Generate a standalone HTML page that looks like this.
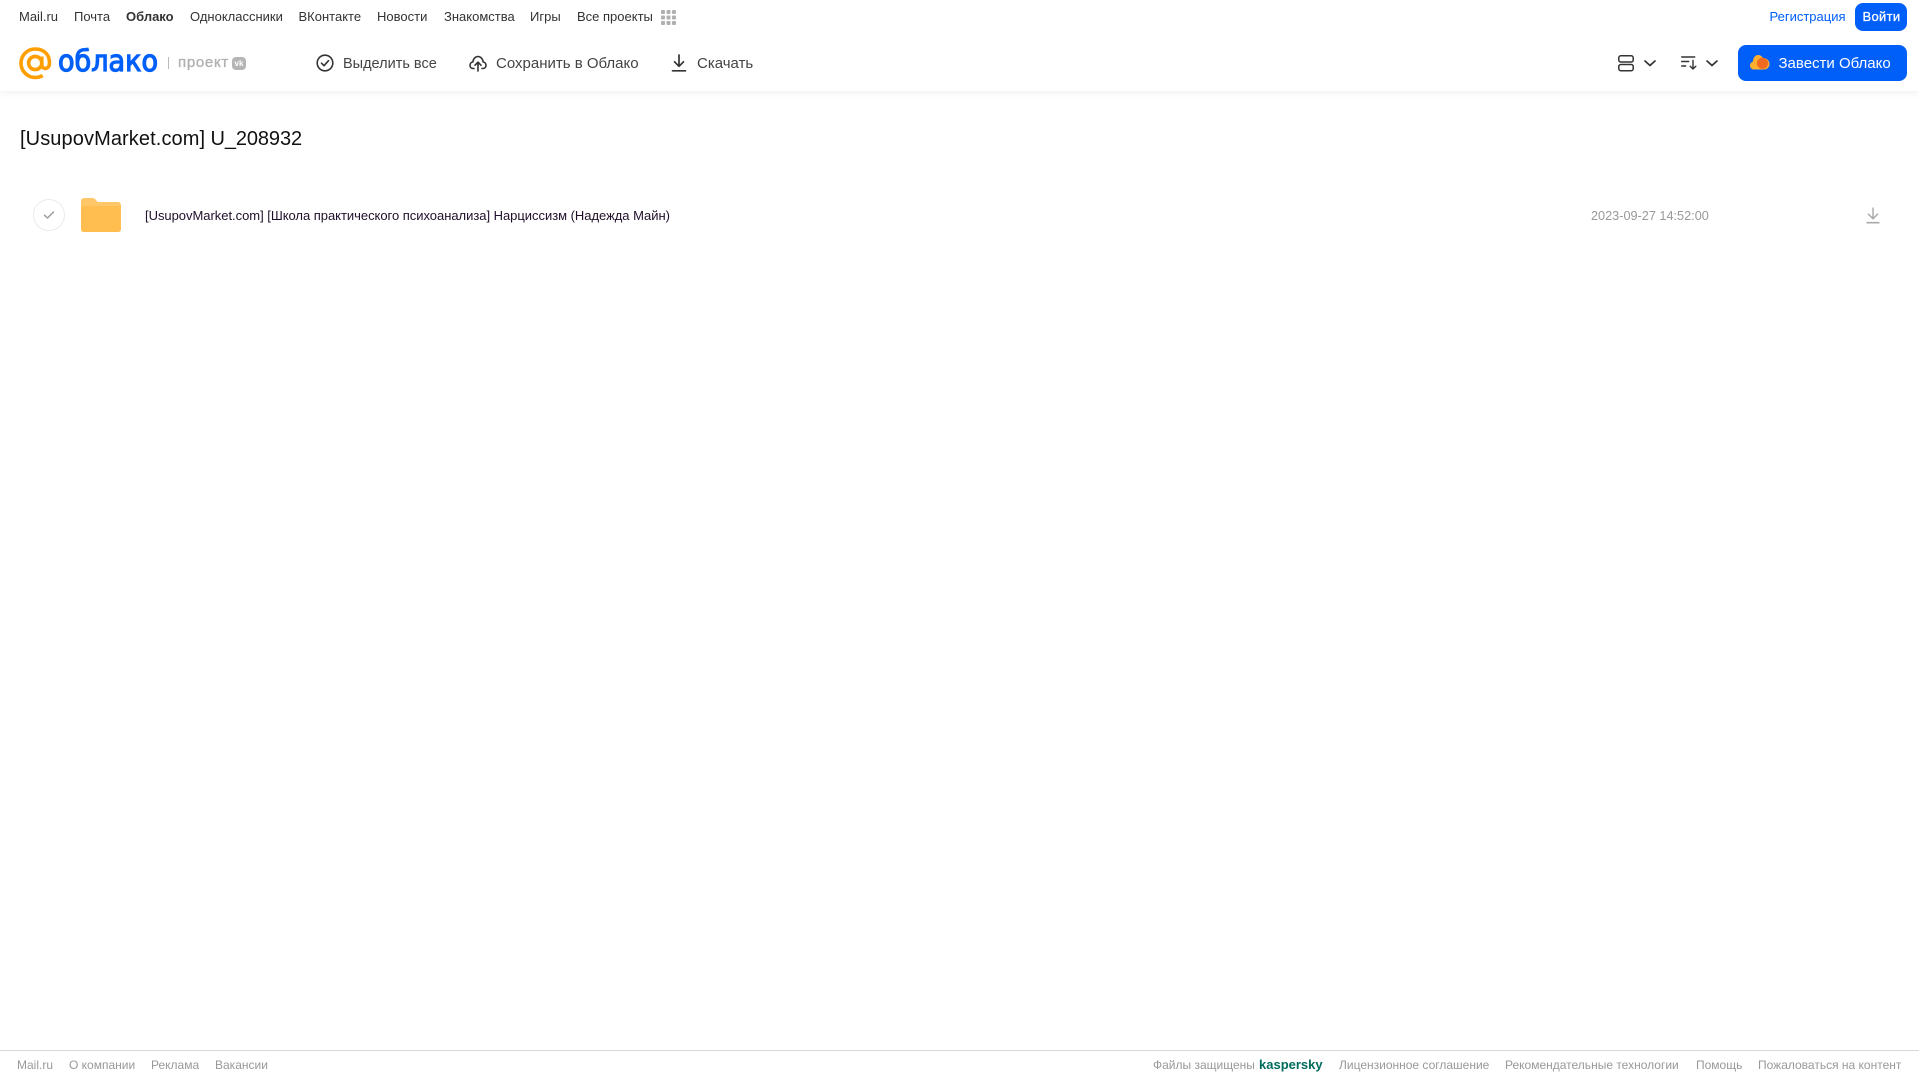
<!DOCTYPE html>
<html lang="ru"><head><meta charset="utf-8"><title>Облако</title>
<style>
html,body{margin:0;padding:0;background:#fff}
body{width:1919px;height:1079px;position:relative;overflow:hidden;font-family:"Liberation Sans",sans-serif}
.t{position:absolute;white-space:nowrap;line-height:20px;height:20px}
.n{font-size:13px;top:7px;color:#333}
.h{font-size:15px;top:53.500px;color:#444}
.f{font-size:12px;top:1055px;color:#999}
svg{position:absolute;overflow:visible}
#hdr{position:absolute;left:0;top:0;width:1919px;height:91px;background:#fff;box-shadow:0 1px 8px rgba(0,0,0,.07)}
</style></head><body>
<div id="hdr"></div>
<span class="t n" style="left:19px">Mail.ru</span>
<span class="t n" style="left:74px">Почта</span>
<span class="t n" style="left:126px;font-weight:bold">Облако</span>
<span class="t n" style="left:190px">Одноклассники</span>
<span class="t n" style="left:298.500px">ВКонтакте</span>
<span class="t n" style="left:377px">Новости</span>
<span class="t n" style="left:444px">Знакомства</span>
<span class="t n" style="left:530px">Игры</span>
<span class="t n" style="left:577px">Все проекты</span>
<svg style="left:661px;top:10px" width="15" height="15" fill="#b0b0b0"><rect width="4" height="4" rx="1"/><rect x="5.500" width="4" height="4" rx="1"/><rect x="11" width="4" height="4" rx="1"/><rect y="5.500" width="4" height="4" rx="1"/><rect x="5.500" y="5.500" width="4" height="4" rx="1"/><rect x="11" y="5.500" width="4" height="4" rx="1"/><rect y="11" width="4" height="4" rx="1"/><rect x="5.500" y="11" width="4" height="4" rx="1"/><rect x="11" y="11" width="4" height="4" rx="1"/></svg>
<span class="t n" style="left:1769.500px;color:#005ff9">Регистрация</span>
<div style="position:absolute;left:1855px;top:3px;width:52px;height:28px;background:#005ff9;border-radius:8px"></div>
<span class="t n" style="left:1862.500px;color:#fff;letter-spacing:.3px;-webkit-text-stroke:.3px #fff">Войти</span>

<svg style="left:19px;top:47px" width="33" height="33" viewBox="0 0 33 33" fill="none" stroke="#ff9e00" stroke-width="3.600"><circle cx="16.200" cy="16" r="6.600"/><path d="M22.800 9.500v8.200c0 5 6.800 5 7.500-.2C31.500 8 25 2 16.200 2 8.300 2 2 8.300 2 16.200 2 24 8.300 30.500 16.200 30.500c3 0 5.500-.8 7.500-2"/></svg>
<svg style="left:56px;top:44px" width="104" height="36"><text x="2" y="27" font-family="DejaVu Sans" font-size="29" fill="#005ff9" stroke="#005ff9" stroke-width="1.200" textLength="100" lengthAdjust="spacingAndGlyphs">облако</text></svg>
<div style="position:absolute;left:168px;top:57px;width:1px;height:12px;background:#bbb"></div>
<span class="t" style="left:178px;top:53px;font-size:15px;color:#b0b0b0;letter-spacing:.7px;-webkit-text-stroke:.35px #b0b0b0">проект</span>
<div style="position:absolute;left:232px;top:57px;width:14px;height:13px;background:#b5b5b5;border-radius:4px;color:#fff;font-size:8px;font-weight:bold;line-height:13px;text-align:center">vk</div>

<svg style="left:316px;top:54px" width="18" height="18" viewBox="0 0 18 18" fill="none" stroke="#333" stroke-width="1.600"><circle cx="9" cy="9" r="7.800"/><path d="M5.500 9.200l2.500 2.500 4.500-5" stroke-linecap="round" stroke-linejoin="round"/></svg>
<span class="t h" style="left:343px;font-size:14.500px">Выделить все</span>
<svg style="left:469px;top:54px" width="18" height="18" viewBox="0 0 18 18" fill="none" stroke="#333" stroke-width="1.600" stroke-linecap="round" stroke-linejoin="round"><path d="M5 14.500H4.200C2.300 14.500 1 13 1 11.200c0-1.700 1.200-3 2.800-3.200C4.200 4.800 6.300 2.500 9 2.500s4.800 2.300 5.200 5.500c1.600.2 2.800 1.500 2.800 3.200 0 1.800-1.300 3.300-3.200 3.300H13"/><path d="M9 17V8.500M6 11.200l3-3 3 3"/></svg>
<span class="t h" style="left:496px">Сохранить в Облако</span>
<svg style="left:671px;top:54px" width="16" height="18" viewBox="0 0 16 18" fill="none" stroke="#333" stroke-width="1.700" stroke-linecap="round" stroke-linejoin="round"><path d="M8 1v11M3.500 7.800L8 12.300l4.500-4.500"/><path d="M1.500 16.800h13"/></svg>
<span class="t h" style="left:697px">Скачать</span>

<svg style="left:1618px;top:55px" width="16" height="17" viewBox="0 0 16 17" fill="none" stroke="#333" stroke-width="1.500"><rect x=".8" y=".8" width="14.400" height="6.200" rx="2"/><rect x=".8" y="9.500" width="14.400" height="6.200" rx="2"/></svg>
<svg style="left:1644px;top:60px" width="12" height="7" viewBox="0 0 12 7" fill="none" stroke="#333" stroke-width="1.700" stroke-linecap="round" stroke-linejoin="round"><path d="M1 1l5 4.500L11 1"/></svg>
<svg style="left:1681px;top:56px" width="17" height="14" viewBox="0 0 17 14" fill="none" stroke="#333" stroke-width="1.400" stroke-linecap="round" stroke-linejoin="round"><path d="M.7 1h13M.7 5.500h7M.7 10h4"/><path d="M12 4.500V13M9.200 10.200L12 13l2.800-2.800"/></svg>
<svg style="left:1706px;top:60px" width="12" height="7" viewBox="0 0 12 7" fill="none" stroke="#333" stroke-width="1.700" stroke-linecap="round" stroke-linejoin="round"><path d="M1 1l5 4.500L11 1"/></svg>
<div style="position:absolute;left:1738px;top:45px;width:169px;height:36px;background:#005ff9;border-radius:8px"></div>
<svg style="left:1750px;top:54px" width="20" height="16" viewBox="0 0 20 16"><path d="M4 15.500C1.800 15.500 0 13.800 0 11.500c0-1.900 1.200-3.300 2.800-3.800C3 4 5.200 1 8 1c2.300 0 4 1.300 5 3.200 3.500-.5 6.500 2.300 6.500 5.800 0 3-2.400 5.500-5.500 5.500z" fill="#ffb02e"/><circle cx="12.500" cy="9.300" r="5.600" fill="#f26a1f"/></svg>
<span class="t h" style="left:1778.500px;color:#fff">Завести Облако</span>

<span class="t" style="left:20px;top:125.500px;height:26px;line-height:26px;font-size:20px;color:#111;letter-spacing:.1px">[UsupovMarket.com]</span>
<span class="t" style="left:210.500px;top:125.500px;height:26px;line-height:26px;font-size:20px;color:#111;letter-spacing:-.1px">U_208932</span>

<div style="position:absolute;left:33px;top:199px;width:30px;height:30px;border:1px solid #ebebeb;border-radius:50%"></div>
<svg style="left:43px;top:210px" width="12" height="10" viewBox="0 0 12 10" fill="none" stroke="#999" stroke-width="1.400" stroke-linecap="round" stroke-linejoin="round"><path d="M1.500 5.300L4.500 8l6-6"/></svg>
<svg style="left:81px;top:198px" width="40" height="34" viewBox="0 0 40 34"><path d="M0 3a3 3 0 0 1 3-3h8c2 0 3 .8 4 2l1.500 2H37a3 3 0 0 1 3 3v24a3 3 0 0 1-3 3H3a3 3 0 0 1-3-3z" fill="#ffc768"/><path d="M0 10a2 2 0 0 1 2-2h36a2 2 0 0 1 2 2v21a3 3 0 0 1-3 3H3a3 3 0 0 1-3-3z" fill="#ffbe4f"/></svg>
<span class="t" style="left:145px;top:205.500px;font-size:13px;letter-spacing:-.03px;color:#1f0f2a">[UsupovMarket.com] [Школа практического психоанализа] Нарциссизм (Надежда Майн)</span>
<span class="t" style="left:1591px;top:205.500px;font-size:12.700px;color:#999">2023-09-27 14:52:00</span>
<svg style="left:1866px;top:207px" width="14" height="17" viewBox="0 0 14 17" fill="none" stroke="#a8a8a8" stroke-width="1.400"><path d="M7 0.500v11M2 6.800l5 5 5-5"/><path d="M.5 15.700h13" stroke-width="1.600"/></svg>

<div style="position:absolute;left:0;top:1050px;width:1919px;height:1px;background:#d9d9d9"></div>
<span class="t f" style="left:17px">Mail.ru</span>
<span class="t f" style="left:69px">О компании</span>
<span class="t f" style="left:151px">Реклама</span>
<span class="t f" style="left:215px">Вакансии</span>
<span class="t f" style="left:1153px">Файлы защищены</span>
<span class="t f" style="left:1259px;color:#006d5c;font-weight:bold;font-size:13px">kaspersky</span>
<span class="t f" style="left:1339px">Лицензионное соглашение</span>
<span class="t f" style="left:1505px">Рекомендательные технологии</span>
<span class="t f" style="left:1696px">Помощь</span>
<span class="t f" style="left:1758px">Пожаловаться на контент</span>
</body></html>
